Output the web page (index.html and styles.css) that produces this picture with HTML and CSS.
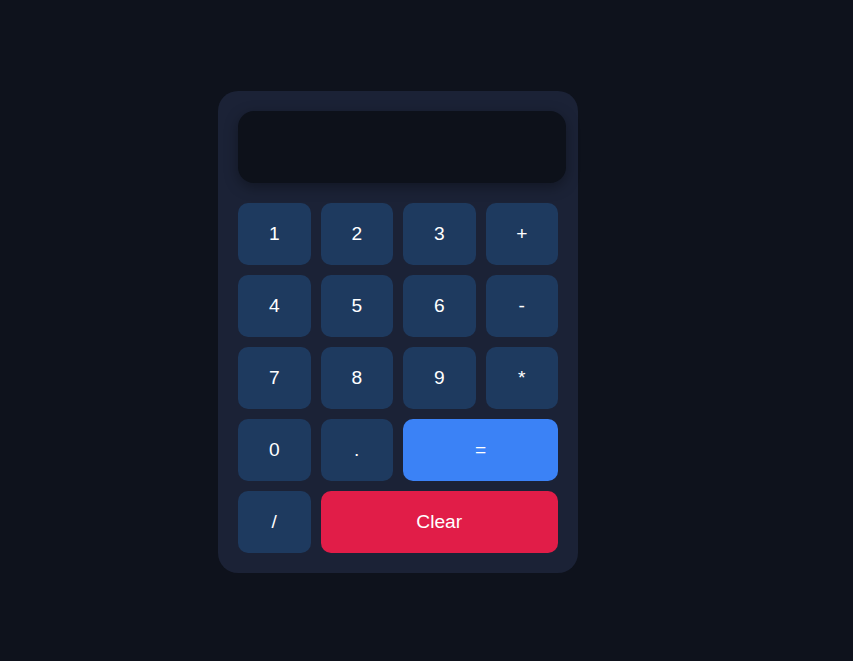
FILE: index.html
```html
<!DOCTYPE html>
<html>
<head>
<meta charset="utf-8">
<link rel="stylesheet" href="styles.css">
</head>
<body>
<div class="calc">
  <div class="display"></div>
  <div class="keys">
    <button class="key">1</button>
    <button class="key">2</button>
    <button class="key">3</button>
    <button class="key">+</button>
    <button class="key">4</button>
    <button class="key">5</button>
    <button class="key">6</button>
    <button class="key">-</button>
    <button class="key">7</button>
    <button class="key">8</button>
    <button class="key">9</button>
    <button class="key">*</button>
    <button class="key">0</button>
    <button class="key">.</button>
    <button class="key equals">=</button>
    <button class="key">/</button>
    <button class="key clear">Clear</button>
  </div>
</div>
</body>
</html>
```
FILE: styles.css
```css
html, body {
  margin: 0;
  height: 100%;
}
body {
  background: #0e121c;
  display: flex;
  align-items: center;
  justify-content: center;
  padding: 3px 57px 0 0;
  box-sizing: border-box;
  font-family: "Liberation Sans", Arial, sans-serif;
}
.calc {
  width: 360px;
  box-sizing: border-box;
  padding: 20px;
  background: #1b2236;
  border-radius: 20px;
}
.display {
  width: 328px;
  height: 72px;
  background: #0d111a;
  border-radius: 16px;
  box-shadow: 0 4px 14px rgba(0, 0, 0, 0.35);
  margin-bottom: 20px;
}
.keys {
  display: grid;
  grid-template-columns: repeat(4, 1fr);
  grid-auto-rows: 62px;
  gap: 10px;
}
.key {
  border: none;
  border-radius: 10px;
  background: #1e3a5f;
  color: #ffffff;
  font-family: "Liberation Sans", Arial, sans-serif;
  font-size: 19.2px;
  padding: 0;
}
.equals {
  grid-column: span 2;
  background: #3b82f6;
}
.clear {
  grid-column: span 3;
  background: #e11d48;
}
```
